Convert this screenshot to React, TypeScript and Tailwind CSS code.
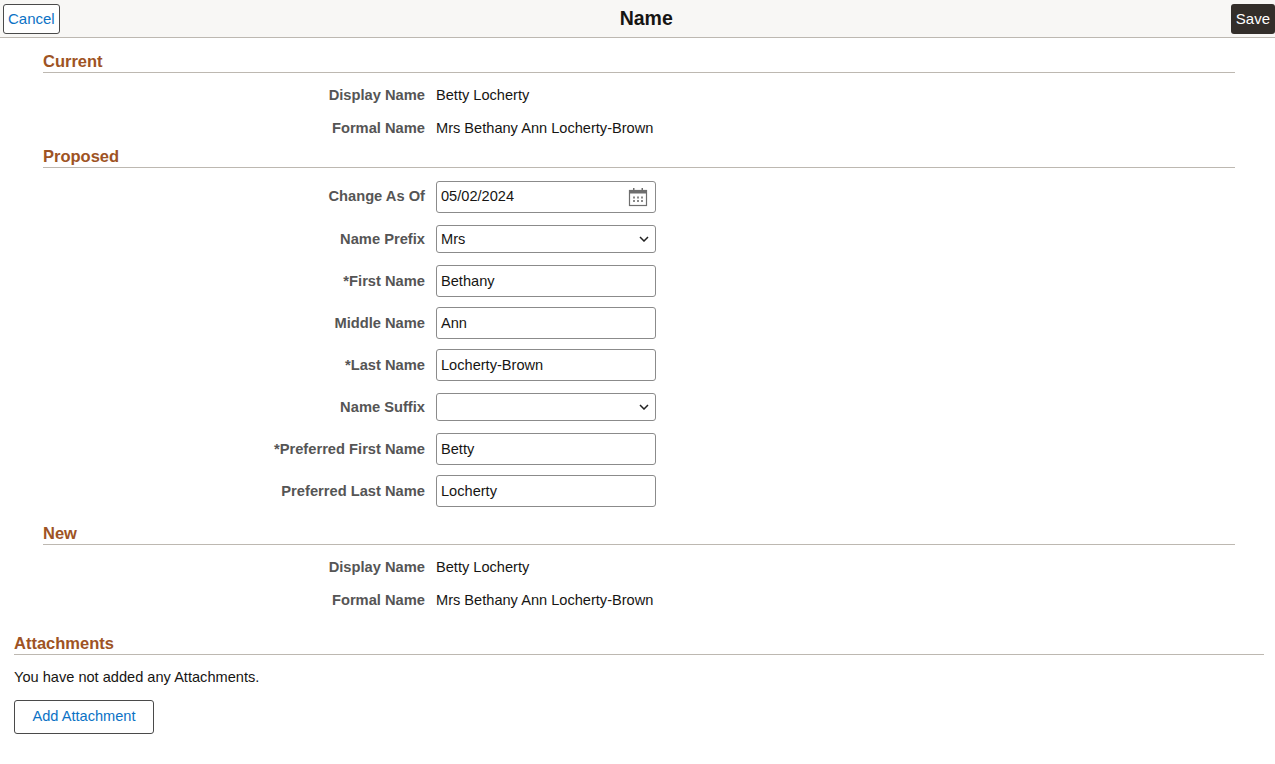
import React from "react";

const font = { fontFamily: '"Liberation Sans", Arial, sans-serif' };

function Heading({ children, wide }: { children: React.ReactNode; wide?: boolean }) {
  return (
    <div className={`${wide ? "ml-[14px] mr-[11px]" : "ml-[43px] mr-[40px]"} border-b border-[#bdb8b1] pb-[2px]`}>
      <div className="text-[16.5px] leading-[18px] font-bold text-[#9e5324]">{children}</div>
    </div>
  );
}

function InfoRow({ label, value }: { label: string; value: string }) {
  return (
    <div className="flex items-center h-[17px] leading-[17px]">
      <div className="w-[425px] text-right font-bold text-[#555555] text-[14.7px]">{label}</div>
      <div className="ml-[11px] text-[#161513] text-[14.6px]">{value}</div>
    </div>
  );
}

function Chevron() {
  return (
    <svg width="10" height="6" viewBox="0 0 10 6" className="absolute right-[6px] top-1/2 -translate-y-1/2">
      <path d="M1 1 L5 5 L9 1" fill="none" stroke="#222" strokeWidth="1.5" />
    </svg>
  );
}

function Calendar() {
  return (
    <svg width="20" height="20" viewBox="0 0 20 20" className="absolute right-[7px] top-1/2 -translate-y-1/2">
      <rect x="1.5" y="3.5" width="17" height="15" fill="none" stroke="#6e6e6e" strokeWidth="1.2" />
      <rect x="1.5" y="3.5" width="17" height="3" fill="#6e6e6e" />
      <rect x="5" y="1" width="1.5" height="4" fill="#6e6e6e" />
      <rect x="13.5" y="1" width="1.5" height="4" fill="#6e6e6e" />
      {[0, 1, 2].map((c) =>
        [0, 1].map((r) => (
          <rect key={`${c}-${r}`} x={5 + c * 4} y={9.5 + r * 3.5} width="2" height="2" fill="#8a8a8a" />
        ))
      )}
    </svg>
  );
}

function FieldRow({
  label,
  value,
  kind = "text",
  h = "h-[42px]",
}: {
  label: string;
  value: string;
  kind?: "text" | "select" | "date";
  h?: string;
}) {
  const boxH = kind === "select" ? "h-[28px]" : "h-[32px]";
  return (
    <div className={`flex items-center ${h}`}>
      <div className="w-[425px] text-right font-bold text-[#555555] leading-[17px] text-[14.7px]">{label}</div>
      <div
        className={`ml-[11px] relative w-[220px] ${boxH} border border-[#8b8b8b] rounded-[3px] bg-white flex items-center pl-[4px] text-[#161513] text-[14.6px]`}
      >
        <span className="leading-[17px]">{value}</span>
        {kind === "select" && <Chevron />}
        {kind === "date" && <Calendar />}
      </div>
    </div>
  );
}

export default function App() {
  return (
    <div style={font} className="w-[1275px] h-[764px] bg-white text-[14px] text-[#161513]">
      {/* Header */}
      <div className="h-[38px] bg-[#f8f7f5] border-b border-[#bdb8b1] flex items-center justify-between px-[3px]">
        <button className="h-[30px] px-[4px] border border-[#4a4a4a] rounded-[3px] bg-white text-[#0b72c5] text-[15px] leading-none">
          Cancel
        </button>
        <div className="text-[19.5px] font-bold text-[#161513] pl-[2px]">Name</div>
        <button className="h-[30px] px-[5px] -mr-[3px] rounded-[3px] bg-[#332e2a] text-white text-[15px] leading-none">
          Save
        </button>
      </div>

      {/* Current */}
      <div className="pt-[14px]">
        <Heading>Current</Heading>
      </div>
      <div className="mt-[14px] flex flex-col gap-[16px]">
        <InfoRow label="Display Name" value="Betty Locherty" />
        <InfoRow label="Formal Name" value="Mrs Bethany Ann Locherty-Brown" />
      </div>

      {/* Proposed */}
      <div className="mt-[10px]">
        <Heading>Proposed</Heading>
      </div>
      <div className="mt-[7px] flex flex-col">
        <FieldRow label="Change As Of" value="05/02/2024" kind="date" h="h-[43px]" />
        <FieldRow label="Name Prefix" value="Mrs" kind="select" />
        <FieldRow label="*First Name" value="Bethany" />
        <FieldRow label="Middle Name" value="Ann" />
        <FieldRow label="*Last Name" value="Locherty-Brown" />
        <FieldRow label="Name Suffix" value="" kind="select" />
        <FieldRow label="*Preferred First Name" value="Betty" />
        <FieldRow label="Preferred Last Name" value="Locherty" />
      </div>

      {/* New */}
      <div className="mt-[12px]">
        <Heading>New</Heading>
      </div>
      <div className="mt-[14px] flex flex-col gap-[16px]">
        <InfoRow label="Display Name" value="Betty Locherty" />
        <InfoRow label="Formal Name" value="Mrs Bethany Ann Locherty-Brown" />
      </div>

      {/* Attachments */}
      <div className="mt-[25px]">
        <Heading wide>Attachments</Heading>
      </div>
      <div className="mx-[14px] mt-[14px] leading-[17px] text-[14.6px]">You have not added any Attachments.</div>
      <div className="mx-[14px] mt-[14px]">
        <button className="w-[140px] h-[34px] border border-[#4a4a4a] rounded-[3px] bg-white text-[#0b72c5] text-[14.6px]">
          Add Attachment
        </button>
      </div>
    </div>
  );
}
